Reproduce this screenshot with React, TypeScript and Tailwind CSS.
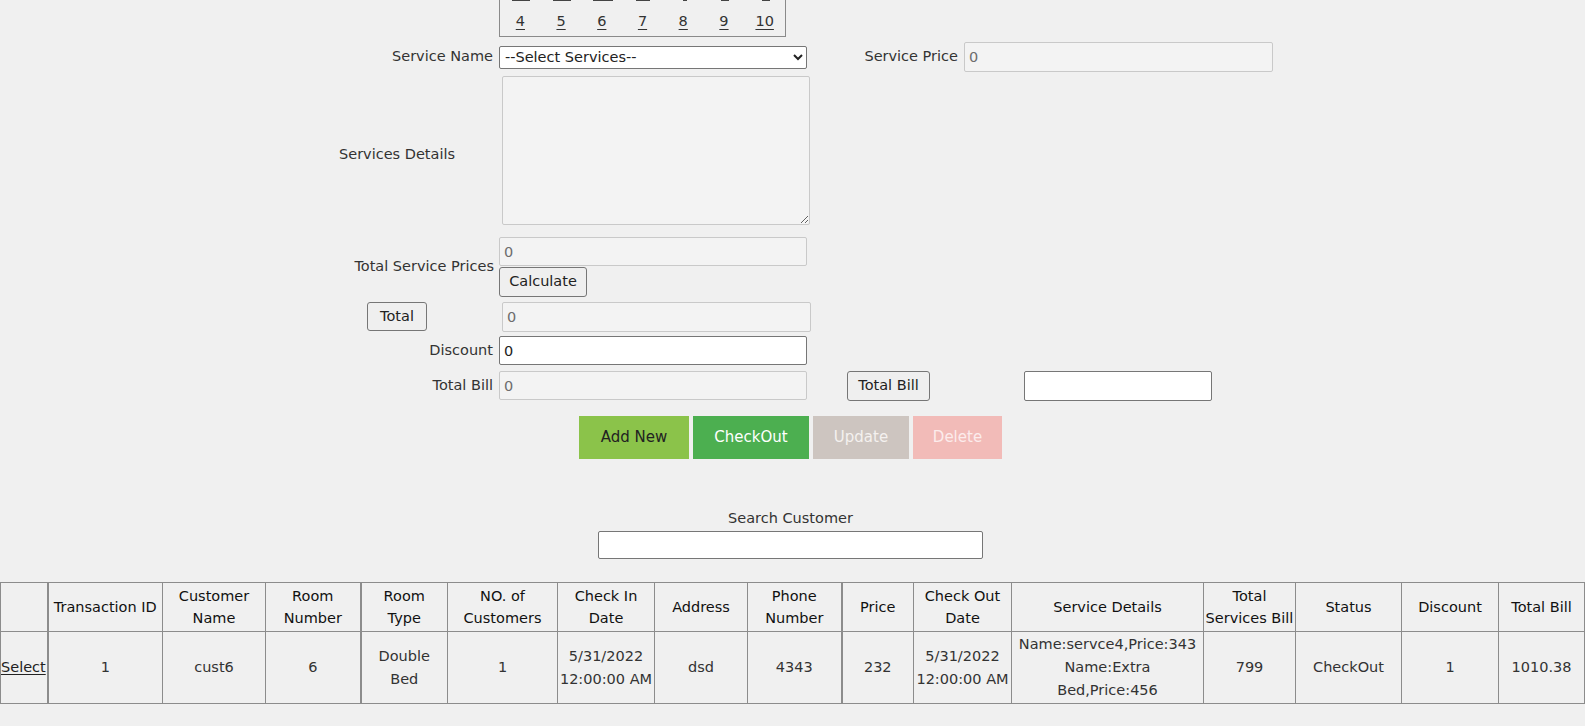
import React from "react";

const marks = [
  { ml: 12, w: 18 },
  { ml: 23, w: 18 },
  { ml: 22, w: 20 },
  { ml: 23, w: 14 },
  { ml: 33, w: 4 },
  { ml: 34, w: 8 },
  { ml: 33, w: 8 },
];
const lastRow = ["4", "5", "6", "7", "8", "9", "10"];

const roInput =
  "bg-[#f3f3f3] border border-[#c9c9c9] rounded-[2px] px-[4px] text-[#6d6d6d] outline-none";
const btn =
  "bg-[#efefef] border border-[#767676] rounded-[3px] text-[#222] flex items-center justify-center";

export default function App() {
  const cols = [47, 115, 103, 95, 87, 110, 97, 93, 94, 72, 98, 192, 92, 106, 97, 86];
  const th = "border border-[#8c8c8c] px-[1px] py-[2px] leading-[22px] font-normal text-[#111] text-center align-middle";
  const td = "border border-[#8c8c8c] px-[1px] py-px leading-[23px] text-[#333] text-center align-middle";
  return (
    <div className="min-h-screen bg-[#f0f0f0] font-['DejaVu_Sans',sans-serif] text-[14.5px] text-[#333]">
      {/* calendar remnant */}
      <div className="ml-[499px] w-[287px] h-[37px] border-x border-b border-[#8a8a8a] flex flex-col">
        <div className="flex h-[1px]">
          {marks.map((m, i) => (
            <div key={i} className="h-[1px] bg-[#444]" style={{ marginLeft: m.ml, width: m.w }} />
          ))}
        </div>
        <div className="flex h-[35px] pt-[6px]">
          {lastRow.map((n) => (
            <div key={n} className="w-[41px] flex items-center justify-center">
              <span className="underline underline-offset-[3px] text-[#333]">{n}</span>
            </div>
          ))}
        </div>
      </div>

      {/* Row A */}
      <div className="mt-[5px] flex items-center h-[30px]">
        <div className="w-[493px] text-right">Service Name</div>
        <select className="ml-[6px] w-[308px] h-[23px] bg-white border border-[#767676] rounded-[2px] text-[#222] pl-[1px]">
          <option>--Select Services--</option>
        </select>
        <div className="w-[151px] text-right">Service Price</div>
        <input readOnly value="0" className={`ml-[6px] w-[309px] h-[30px] ${roInput}`} />
      </div>

      {/* Row B */}
      <div className="mt-[4px] flex h-[149px]">
        <div className="w-[502px] pl-[339px] pt-[8px] flex items-center">Services Details</div>
        <textarea readOnly className="w-[308px] h-[149px] bg-[#f3f3f3] border border-[#c9c9c9] rounded-[2px] outline-none" />
      </div>

      {/* Row C */}
      <div className="mt-[12px] flex">
        <div className="w-[494px] text-right self-center">Total Service Prices</div>
        <div className="ml-[5px] flex flex-col">
          <input readOnly value="0" className={`w-[308px] h-[29px] ${roInput}`} />
          <button className={`mt-px w-[88px] h-[30px] ${btn}`}>Calculate</button>
        </div>
      </div>

      {/* Row D */}
      <div className="mt-[5px] flex items-start">
        <button className={`ml-[367px] w-[60px] h-[29px] ${btn}`}>Total</button>
        <input readOnly value="0" className={`ml-[75px] w-[309px] h-[30px] ${roInput}`} />
      </div>

      {/* Row E */}
      <div className="mt-[4px] flex items-center">
        <div className="w-[493px] text-right">Discount</div>
        <input readOnly value="0" className="ml-[6px] w-[308px] h-[29px] bg-white border border-[#767676] rounded-[2px] px-[4px] text-[#222] outline-none" />
      </div>

      {/* Row F */}
      <div className="mt-[6px] flex items-start">
        <div className="w-[493px] text-right leading-[29px]">Total Bill</div>
        <input readOnly value="0" className={`ml-[6px] w-[308px] h-[29px] ${roInput}`} />
        <button className={`ml-[40px] w-[83px] h-[30px] ${btn}`}>Total Bill</button>
        <input readOnly value="" className="ml-[94px] w-[188px] h-[30px] bg-white border border-[#767676] rounded-[2px] outline-none" />
      </div>

      {/* Row G */}
      <div className="mt-[15px] flex gap-[4px] ml-[579px] text-[15px]">
        <button className="w-[110px] h-[43px] bg-[#8bc34a] text-[#222]">Add New</button>
        <button className="w-[116px] h-[43px] bg-[#4caf50] text-white">CheckOut</button>
        <button className="w-[96px] h-[43px] bg-[#cdc5c0] text-[#f4f1ef]">Update</button>
        <button className="w-[89px] h-[43px] bg-[#f2bbb8] text-[#fcecec]">Delete</button>
      </div>

      {/* Search */}
      <div className="mt-[49px] ml-[598px] w-[385px] flex flex-col">
        <div className="text-center leading-[20px]">Search Customer</div>
        <input className="mt-[3px] w-[385px] h-[28px] bg-white border border-[#767676] rounded-[2px] outline-none" />
      </div>

      {/* Table */}
      <table className="mt-[23px] w-full table-fixed border-collapse">
        <colgroup>
          {cols.map((w, i) => (
            <col key={i} style={{ width: w }} />
          ))}
        </colgroup>
        <thead>
          <tr>
            <th className={th}></th>
            <th className={`${th} border-l-2 whitespace-nowrap`}>Transaction ID</th>
            <th className={th}>Customer<br />Name</th>
            <th className={th}>Room<br />Number</th>
            <th className={`${th} border-l-2`}>Room<br />Type</th>
            <th className={th}>NO. of<br />Customers</th>
            <th className={th}>Check In<br />Date</th>
            <th className={th}>Address</th>
            <th className={th}>Phone<br />Number</th>
            <th className={`${th} border-l-2`}>Price</th>
            <th className={th}>Check Out<br />Date</th>
            <th className={th}>Service Details</th>
            <th className={`${th} whitespace-nowrap`}>Total<br />Services Bill</th>
            <th className={th}>Status</th>
            <th className={th}>Discount</th>
            <th className={th}>Total Bill</th>
          </tr>
        </thead>
        <tbody>
          <tr>
            <td className={`border border-[#8c8c8c] pl-0 pr-[1px] py-px leading-[23px] text-left align-middle`}>
              <span className="underline underline-offset-2 text-[#222]">Select</span>
            </td>
            <td className={`${td} border-l-2`}>1</td>
            <td className={td}>cust6</td>
            <td className={td}>6</td>
            <td className={`${td} border-l-2`}>Double<br />Bed</td>
            <td className={td}>1</td>
            <td className={td}>5/31/2022<br />12:00:00 AM</td>
            <td className={td}>dsd</td>
            <td className={td}>4343</td>
            <td className={`${td} border-l-2`}>232</td>
            <td className={td}>5/31/2022<br />12:00:00 AM</td>
            <td className={`${td} whitespace-nowrap`}>Name:servce4,Price:343<br />Name:Extra<br />Bed,Price:456</td>
            <td className={td}>799</td>
            <td className={td}>CheckOut</td>
            <td className={td}>1</td>
            <td className={td}>1010.38</td>
          </tr>
        </tbody>
      </table>
    </div>
  );
}
